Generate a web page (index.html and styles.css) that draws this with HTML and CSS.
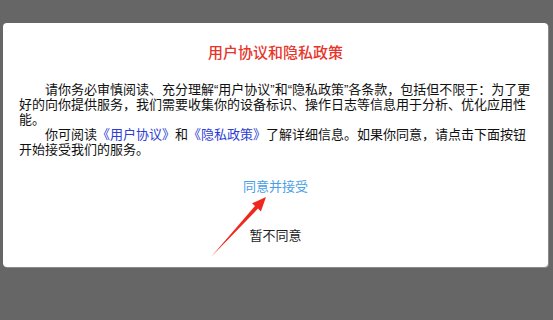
FILE: index.html
```html
<!DOCTYPE html>
<html lang="zh-CN">
<head>
  <meta charset="UTF-8" />
  <meta name="viewport" content="width=device-width, initial-scale=1.0" />
  <title>用户协议和隐私政策</title>
  <link rel="stylesheet" href="styles.css">
</head>
<body>

  <div class="dialog">
    <h2 class="title">用户协议和隐私政策</h2>
    <p class="para">请你务必审慎阅读、充分理解“用户协议”和“隐私政策”各条款，包括但不限于：为了更好的向你提供服务，我们需要收集你的设备标识、操作日志等信息用于分析、优化应用性能。</p>
    <p class="para">你可阅读<a class="link" href="#">《用户协议》</a>和<a class="link" href="#">《隐私政策》</a>了解详细信息。如果你同意，请点击下面按钮开始接受我们的服务。</p>
    <div class="actions">
      <button class="btn btn-accept">同意并接受</button>
      <button class="btn btn-reject">暂不同意</button>
    </div>
  </div>

  <!-- 标注箭头 -->
  <svg class="arrow" width="553" height="320" viewBox="0 0 553 320">
    <polygon fill="#f0271d" points="211,257 258,208.6 260.9,211.4 266,197 252.1,203.3 255,206"/>
  </svg>

</body>
</html>
```

FILE: styles.css
```css
body {
  font-family: "Liberation Sans", "Noto Sans CJK SC", sans-serif;
  background: #666;
  color: #222;
  margin: 0;
  height: 320px;
  position: relative;
  overflow: hidden;
}
.dialog {
  margin: 23px 5px 0 3px;
  padding: 20px 16px 11px;
  background: #fff;
  border-radius: 4px;
  box-shadow: 1px 1px 0 #8a8a8a;
}
.title {
  margin: 0 0 19px;
  font-size: 15px;
  line-height: 20px;
  font-weight: 500;
  color: #e8352b;
  text-align: center;
}
.para {
  margin: 0;
  font-size: 13px;
  line-height: 15px;
  text-indent: 2em;
  color: #111;
}
.link {
  color: #2c3ed4;
  text-decoration: none;
}
.actions {
  display: flex;
  flex-direction: column;
  align-items: center;
  margin-top: 10px;
}
.btn {
  font-family: inherit;
  font-size: 13px;
  line-height: 20px;
  padding: 10px 20px;
  background: none;
  border: none;
  cursor: pointer;
}
.btn-accept {
  color: #4a9ee6;
  margin-bottom: 9px;
}
.btn-reject {
  color: #222;
}
.arrow {
  position: absolute;
  left: 0;
  top: 0;
  pointer-events: none;
}
```
